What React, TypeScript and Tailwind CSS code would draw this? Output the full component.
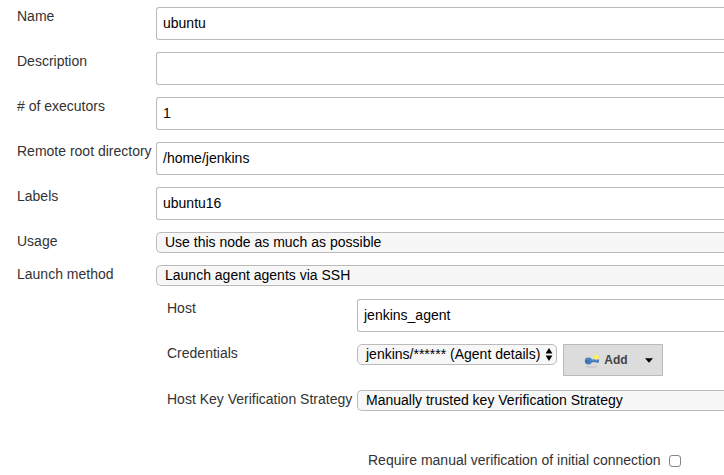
import type { ReactNode } from "react";

function Row({ label, indent = false, gap, children }: { label: string; indent?: boolean; gap: string; children: ReactNode }) {
  return (
    <div className={`flex items-start ${indent ? "pl-[167px]" : "pl-[17px]"} ${gap}`}>
      <div className={`shrink-0 whitespace-nowrap leading-[18px] text-[#333] ${indent ? "w-[190px]" : "w-[139px]"}`}>
        <span>{label}</span>
      </div>
      {children}
    </div>
  );
}

function TextBox({ value }: { value: string }) {
  return (
    <div className="h-[33px] flex-1 rounded-l-[3px] border border-r-0 border-[#bbb] bg-white px-1.5 pt-1.5 leading-[18px] text-black">
      <span>{value}</span>
    </div>
  );
}

function Choice({ value }: { value: string }) {
  return (
    <div className="h-[21px] flex-1 rounded-l-[5px] border border-r-0 border-[#bbb] bg-[#f7f7f7] pl-2 leading-[18px] text-black">
      <span>{value}</span>
    </div>
  );
}

function KeyIcon() {
  return (
    <svg width="16" height="16" viewBox="0 0 16 16">
      <ellipse cx="7.5" cy="15" rx="6" ry="0.6" fill="#c2c2c2" />
      <path d="M6 7.6h9v2.6h-.9v.9h-1.3v-.9H6z" fill="#4479bb" />
      <ellipse cx="4.4" cy="9" rx="3.6" ry="3.4" fill="#4479bb" />
      <path d="M2.4 7.4q2-1.6 4 .8H14" fill="none" stroke="#6896cc" strokeWidth="0.7" />
      <circle cx="2.8" cy="9.2" r="0.8" fill="#2f5f98" />
      <circle cx="12.3" cy="5.2" r="2.4" fill="#f3ec50" />
      <path d="M12.3 3v4.4M10.1 5.2h4.4" stroke="#fff75a" strokeWidth="1.2" />
    </svg>
  );
}

export default function App() {
  return (
    <div className="h-[475px] w-[724px] overflow-hidden bg-white pt-[7px] font-['Liberation_Sans',Arial,sans-serif] text-[14px]">
      <Row label="Name" gap="mb-3"><TextBox value="ubuntu" /></Row>
      <Row label="Description" gap="mb-3"><TextBox value="" /></Row>
      <Row label="# of executors" gap="mb-3"><TextBox value="1" /></Row>
      <Row label="Remote root directory" gap="mb-3"><TextBox value="/home/jenkins" /></Row>
      <Row label="Labels" gap="mb-3"><TextBox value="ubuntu16" /></Row>
      <Row label="Usage" gap="mb-3"><Choice value="Use this node as much as possible" /></Row>
      <Row label="Launch method" gap="mb-[13px]"><Choice value="Launch agent agents via SSH" /></Row>
      <Row label="Host" indent gap="mb-3"><TextBox value="jenkins_agent" /></Row>
      <Row label="Credentials" indent gap="mb-3.5">
        <div className="flex h-[21px] w-[200px] items-start justify-between whitespace-nowrap rounded-[5px] border border-[#bbb] bg-[#f7f7f7] pl-2 pr-[3px] leading-[18px] text-black">
          <span>jenkins/****** (Agent details)</span>
          <svg className="mt-[3px] shrink-0" width="8" height="13" viewBox="0 0 8 13">
            <path d="M4 0L7.4 5.5H.6zM4 13L.6 7.5h6.8z" />
          </svg>
        </div>
        <button className="ml-1.5 flex h-8 w-[100px] items-center border border-[#bbb] bg-[#dcdcdc] pl-5 text-[12px] font-bold text-[#444]">
          <KeyIcon />
          <span className="ml-1 w-[24px]">Add</span>
          <svg className="ml-[17px]" width="8" height="5" viewBox="0 0 8 5"><path d="M0 .3h8L4 4.7z" fill="#000" /></svg>
        </button>
      </Row>
      <Row label="Host Key Verification Strategy" indent gap="mb-10"><Choice value="Manually trusted key Verification Strategy" /></Row>
      <div className="flex items-center pl-[368px] leading-[18px] text-[#333]">
        <span>Require manual verification of initial connection</span>
        <span className="ml-2 mt-px h-3 w-3 rounded-[3px] border border-[#858585] bg-white" />
      </div>
    </div>
  );
}
